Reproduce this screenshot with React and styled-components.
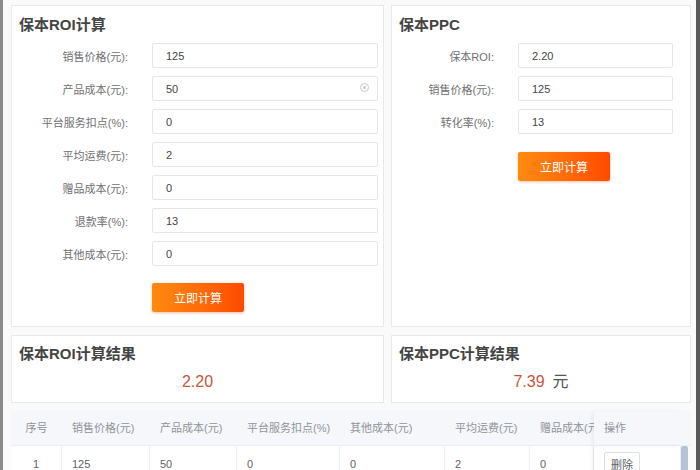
import styled, { createGlobalStyle } from "styled-components";

const GlobalStyle = createGlobalStyle`
  html, body {
    margin: 0;
    padding: 0;
    background: #f7f7f7;
    font-family: "Liberation Sans", "Noto Sans CJK SC", sans-serif;
  }
`;

const Frame = styled.div`
  width: 700px;
  height: 470px;
  overflow: hidden;
  box-sizing: border-box;
  border-left: 3px solid #8a8a8a;
  border-right: 4px solid #5a5a5a;
  background: #fafafa;
`;

const Page = styled.div`
  padding: 5px 0 0 8px;
  display: flex;
  flex-direction: column;
  gap: 8px;
`;

const Columns = styled.div`
  display: grid;
  grid-template-columns: 373px 300px;
  gap: 7px;
`;

const Panel = styled.div`
  background: #fff;
  border: 1px solid #e9e9e9;
  padding: 7px 7px 14px;
  box-sizing: border-box;
`;

const Title = styled.div`
  font-size: 15px;
  font-weight: bold;
  color: #444;
  line-height: 24px;
  margin-bottom: 6px;
`;

const Form = styled.div`
  display: flex;
  flex-direction: column;
  gap: 8px;
`;

const Row = styled.div`
  display: grid;
  grid-template-columns: ${(p) => p.$label}px ${(p) => p.$input}px;
  column-gap: 24px;
  align-items: center;
`;

const Label = styled.label`
  text-align: right;
  font-size: 11px;
  color: #707070;
`;

const InputWrap = styled.div`
  position: relative;
`;

const Input = styled.input`
  width: 100%;
  height: 25px;
  box-sizing: border-box;
  border: 1px solid #e6e6e6;
  border-radius: 2px;
  padding: 0 13px;
  font-family: inherit;
  font-size: 11px;
  color: #444;
  background: #fff;
  outline: none;
`;

const ClearIcon = styled.span`
  position: absolute;
  right: 9px;
  top: 7px;
  width: 9px;
  height: 9px;
  border: 1px solid #c8c8c8;
  border-radius: 50%;
  box-sizing: border-box;
  &::after {
    content: "";
    position: absolute;
    left: 2px;
    top: 2px;
    width: 3px;
    height: 3px;
    border-radius: 50%;
    background: #c8c8c8;
  }
`;

const ButtonRow = styled.div`
  padding-left: ${(p) => p.$offset}px;
  margin-top: ${(p) => p.$top}px;
`;

const Button = styled.button`
  width: 92px;
  height: 29px;
  border: none;
  border-radius: 2px;
  background: linear-gradient(90deg, #ff8a10 0%, #ff6a0a 55%, #ff4a00 100%);
  box-shadow: 0 1px 3px rgba(200, 80, 0, 0.35);
  color: #fff;
  font-family: inherit;
  font-size: 12px;
  cursor: pointer;
`;

const ResultPanel = styled.div`
  background: #fff;
  border: 1px solid #e9e9e9;
  height: 68px;
  box-sizing: border-box;
  padding: 6px 7px 0;
`;

const ResultValue = styled.div`
  text-align: center;
  font-size: 16px;
  line-height: 20px;
  margin-top: 5px;
  color: #c8553d;
  span {
    color: #555;
    margin-left: 8px;
  }
`;

const Table = styled.div`
  width: 677px;
  background: #fff;
  position: relative;
  font-size: 11px;
`;

const Grid = styled.div`
  display: grid;
  grid-template-columns: 51px 88px 87px 103px 105px 85px 64px 87px 7px;
`;

const HeadCell = styled.div`
  height: 34px;
  line-height: 34px;
  padding-left: ${(p) => (p.$center ? 0 : 10)}px;
  text-align: ${(p) => (p.$center ? "center" : "left")};
  background: #f5f7fa;
  color: #909399;
  white-space: nowrap;
  overflow: hidden;
  border-bottom: 1px solid #ebeef5;
  box-shadow: ${(p) => (p.$fixed ? "-2px 0 4px rgba(0,0,0,0.05)" : "none")};
  position: relative;
`;

const Cell = styled.div`
  height: 36px;
  line-height: 36px;
  padding-left: ${(p) => (p.$center ? 0 : 10)}px;
  text-align: ${(p) => (p.$center ? "center" : "left")};
  color: #606266;
  border-right: 1px solid #ebeef5;
  box-shadow: ${(p) => (p.$fixed ? "-2px 0 4px rgba(0,0,0,0.05)" : "none")};
  position: relative;
`;

const Scrollbar = styled.div`
  background: #b6c2d6;
  border-radius: 2px;
`;

const DeleteButton = styled.button`
  height: 24px;
  width: 36px;
  margin-top: 6px;
  border: 1px solid #dcdfe6;
  background: #fff;
  border-radius: 2px;
  color: #606266;
  font-family: inherit;
  font-size: 11px;
  padding: 0;
`;

const roiFields = [
  ["销售价格(元):", "125"],
  ["产品成本(元):", "50", true],
  ["平台服务扣点(%):", "0"],
  ["平均运费(元):", "2"],
  ["赠品成本(元):", "0"],
  ["退款率(%):", "13"],
  ["其他成本(元):", "0"],
];

const ppcFields = [
  ["保本ROI:", "2.20"],
  ["销售价格(元):", "125"],
  ["转化率(%):", "13"],
];

const headers = ["销售价格(元)", "产品成本(元)", "平台服务扣点(%)", "其他成本(元)", "平均运费(元)", "赠品成本(元)"];
const row = ["125", "50", "0", "0", "2", "0"];

export default function App() {
  return (
    <Frame>
      <GlobalStyle />
      <Page>
        <Columns>
          <Panel>
            <Title>保本ROI计算</Title>
            <Form>
              {roiFields.map(([label, value, clear]) => (
                <Row key={label} $label={109} $input={226}>
                  <Label>{label}</Label>
                  <InputWrap>
                    <Input defaultValue={value} />
                    {clear && <ClearIcon />}
                  </InputWrap>
                </Row>
              ))}
            </Form>
            <ButtonRow $offset={133} $top={17}>
              <Button>立即计算</Button>
            </ButtonRow>
          </Panel>
          <Panel>
            <Title>保本PPC</Title>
            <Form>
              {ppcFields.map(([label, value]) => (
                <Row key={label} $label={95} $input={155}>
                  <Label>{label}</Label>
                  <Input defaultValue={value} />
                </Row>
              ))}
            </Form>
            <ButtonRow $offset={119} $top={18}>
              <Button>立即计算</Button>
            </ButtonRow>
          </Panel>
        </Columns>
        <Columns>
          <ResultPanel>
            <Title>保本ROI计算结果</Title>
            <ResultValue>2.20</ResultValue>
          </ResultPanel>
          <ResultPanel>
            <Title>保本PPC计算结果</Title>
            <ResultValue>
              7.39<span>元</span>
            </ResultValue>
          </ResultPanel>
        </Columns>
        <Table>
          <Grid>
            <HeadCell $center>序号</HeadCell>
            {headers.map((h) => (
              <HeadCell key={h}>{h}</HeadCell>
            ))}
            <HeadCell $fixed>操作</HeadCell>
            <HeadCell />
            <Cell $center>1</Cell>
            {row.map((v, i) => (
              <Cell key={i}>{v}</Cell>
            ))}
            <Cell $fixed>
              <DeleteButton>删除</DeleteButton>
            </Cell>
            <Scrollbar />
          </Grid>
        </Table>
      </Page>
    </Frame>
  );
}
